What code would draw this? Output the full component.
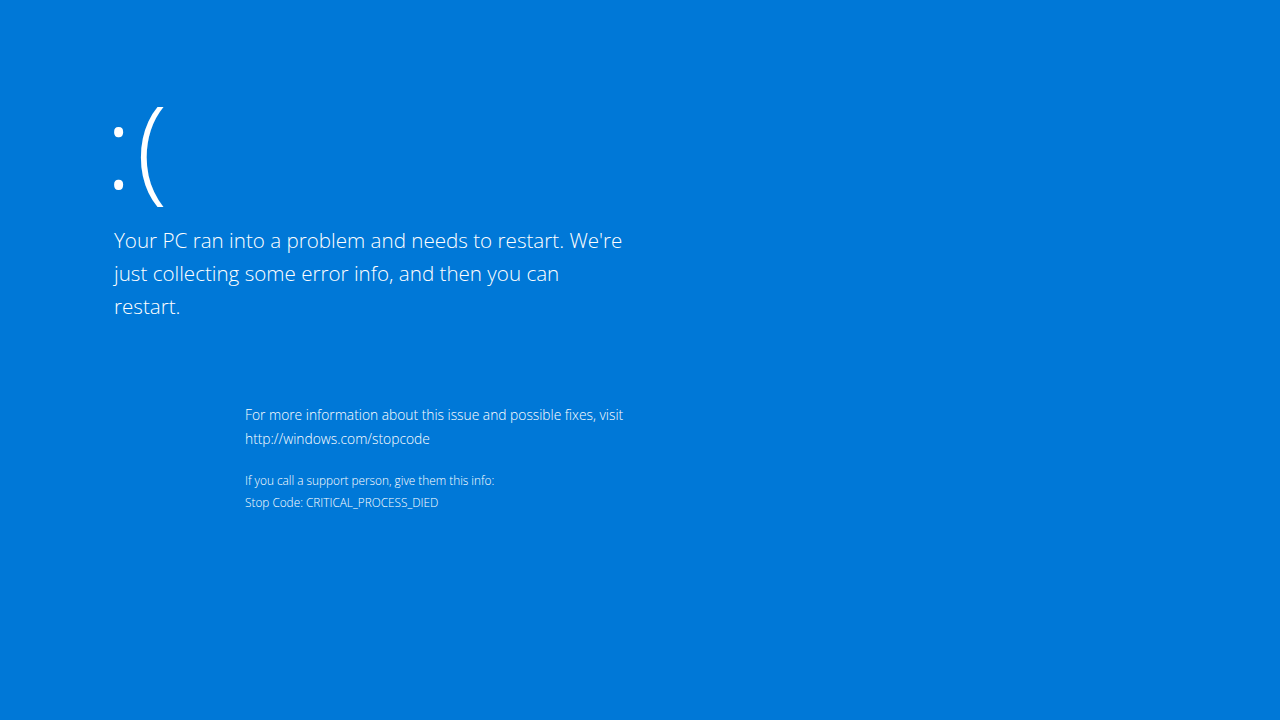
export default function App() {
  return (
    <div
      className="w-[1280px] h-[720px] bg-[#0078d7] text-white overflow-hidden pl-[114px] pt-[69px]"
      style={{ fontFamily: '"Open Sans", "Noto Sans", sans-serif' }}
    >
      {/* sad face */}
      <div className="-ml-[9px] text-[114px] leading-[152px] font-light h-[155px] tracking-[4px]">:(</div>

      {/* main message */}
      <div className="w-[513px] text-[20.6px] leading-[33px] font-light">
        Your PC ran into a problem and needs to restart. We're just collecting some error info, and then you can restart.
      </div>

      {/* details */}
      <div className="ml-[131px] mt-[80px] w-[420px] font-light">
        <div className="text-[13.8px] leading-[24px]">
          For more information about this issue and possible fixes, visit
          <br />
          http://windows.com/stopcode
        </div>
        <div className="mt-[18px] text-[11.8px] leading-[22px]">
          <div>If you call a support person, give them this info:</div>
          <div>Stop Code: CRITICAL_PROCESS_DIED</div>
        </div>
      </div>
    </div>
  )
}
